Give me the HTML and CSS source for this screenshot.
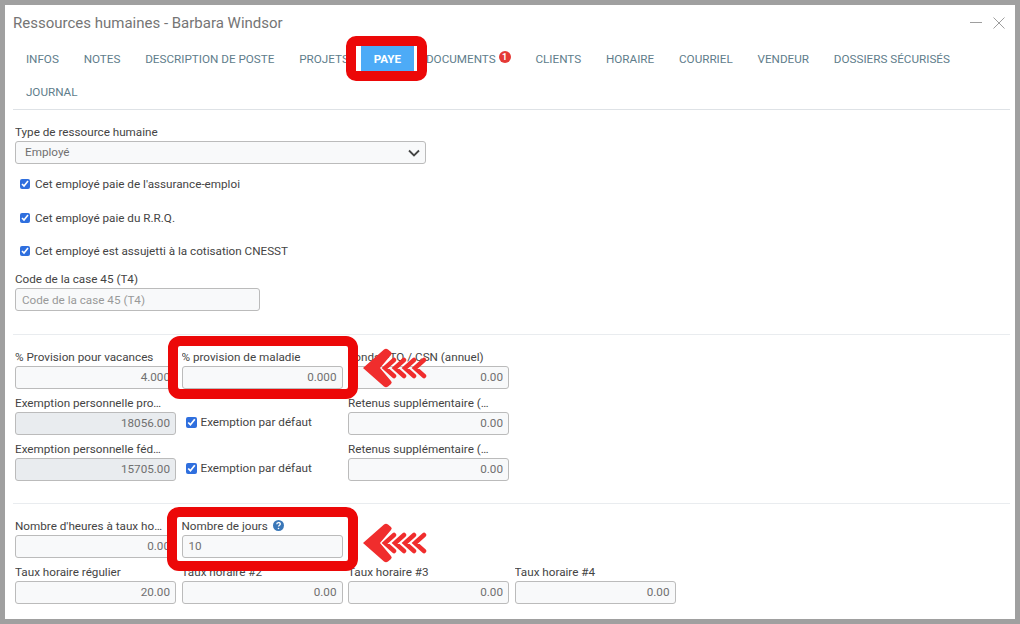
FILE: index.html
```html
<!DOCTYPE html>
<html lang="fr">
<head>
  <meta charset="UTF-8">
  <title>Ressources humaines - Barbara Windsor</title>
  <link rel="stylesheet" href="styles.css">
</head>
<body>
  <div class="dialog">
    <!-- Title bar -->
    <div class="dialog-header">
      <span class="dialog-title">Ressources humaines - Barbara Windsor</span>
      <div class="window-actions">
        <svg width="12" height="12" viewBox="0 0 12 12"><path d="M0 5.500h12" stroke="#9e9e9e" stroke-width="1"/></svg>
        <svg width="12" height="12" viewBox="0 0 12 12"><path d="M.5.5l11 11M11.5.5l-11 11" stroke="#9e9e9e" stroke-width="1" fill="none"/></svg>
      </div>
    </div>

    <!-- Tabs -->
    <div class="tabs">
      <span class="tab">INFOS</span>
      <span class="tab">NOTES</span>
      <span class="tab">DESCRIPTION DE POSTE</span>
      <span class="tab">PROJETS</span>
      <span class="tab active">PAYE</span>
      <span class="tab">DOCUMENTS<span class="badge">1</span></span>
      <span class="tab">CLIENTS</span>
      <span class="tab">HORAIRE</span>
      <span class="tab">COURRIEL</span>
      <span class="tab">VENDEUR</span>
      <span class="tab">DOSSIERS SÉCURISÉS</span>
      <span class="tab">JOURNAL</span>
    </div>

    <!-- General section -->
    <div class="section first-section">
      <div class="field-label">Type de ressource humaine</div>
      <div class="select-box">
        <select class="select-input">
          <option>Employé</option>
        </select>
        <svg class="select-arrow" width="12" height="8" viewBox="0 0 12 8"><path d="M1 1.500l5 5 5-5" stroke="#444" stroke-width="1.800" fill="none"/></svg>
      </div>
      <div class="checks">
        <label class="check-row"><input type="checkbox" class="small-check" checked>Cet employé paie de l'assurance-emploi</label>
        <label class="check-row"><input type="checkbox" class="small-check" checked>Cet employé paie du R.R.Q.</label>
        <label class="check-row"><input type="checkbox" class="small-check" checked>Cet employé est assujetti à la cotisation CNESST</label>
      </div>
      <div class="field-label">Code de la case 45 (T4)</div>
      <input class="text-input code-input" placeholder="Code de la case 45 (T4)">
    </div>

    <!-- Provisions section -->
    <div class="section">
      <div class="field-grid">
        <div class="field"><div class="field-label">% Provision pour vacances</div><input class="text-input number" value="4.000"></div>
        <div class="field"><div class="field-label">% provision de maladie</div><input class="text-input number" value="0.000"></div>
        <div class="field"><div class="field-label">Fonds FTQ / CSN (annuel)</div><input class="text-input number" value="0.00"></div>
        <div></div>

        <div class="field"><div class="field-label">Exemption personnelle provinciale</div><input class="text-input number" value="18056.00" disabled></div>
        <label class="default-check"><input type="checkbox" checked>Exemption par défaut</label>
        <div class="field"><div class="field-label">Retenus supplémentaire (Québec)</div><input class="text-input number" value="0.00"></div>
        <div></div>

        <div class="field"><div class="field-label">Exemption personnelle fédérale</div><input class="text-input number" value="15705.00" disabled></div>
        <label class="default-check"><input type="checkbox" checked>Exemption par défaut</label>
        <div class="field"><div class="field-label">Retenus supplémentaire (Québec)</div><input class="text-input number" value="0.00"></div>
      </div>
    </div>

    <!-- Hours section -->
    <div class="section last-section">
      <div class="field-grid">
        <div class="field"><div class="field-label">Nombre d'heures à taux horaire</div><input class="text-input number" value="0.00"></div>
        <div class="field">
          <div class="field-label">Nombre de jours
            <svg class="help-icon" width="11" height="11" viewBox="0 0 11 11"><circle cx="5.5" cy="5.5" r="5.5" fill="#3a77b8"/><path d="M3.8 4.2c0-2.2 3.5-2.2 3.5-.2 0 1.2-1.8 1.2-1.8 2.6" stroke="#fff" stroke-width="1.3" fill="none"/><circle cx="5.5" cy="8.5" r=".8" fill="#fff"/></svg>
          </div>
          <input class="text-input" value="10">
        </div>
        <div></div>
        <div></div>
        <div class="field"><div class="field-label">Taux horaire régulier</div><input class="text-input number" value="20.00"></div>
        <div class="field"><div class="field-label">Taux horaire #2</div><input class="text-input number" value="0.00"></div>
        <div class="field"><div class="field-label">Taux horaire #3</div><input class="text-input number" value="0.00"></div>
        <div class="field"><div class="field-label">Taux horaire #4</div><input class="text-input number" value="0.00"></div>
      </div>
    </div>
  </div>

  <!-- Annotations drawn over the screenshot -->
  <div class="highlight highlight-tab"></div>
  <div class="highlight highlight-sick"></div>
  <div class="highlight highlight-days"></div>

  <svg class="arrow arrow-sick" width="64" height="40" viewBox="0 0 64 40">
    <path d="M0 20L21 1.500Q23 0 25 1.500L28 4Q29.500 5.500 28 7L17 20L28 33Q29.500 34.500 28 36L25 38.500Q23 40 21 38.500Z" fill="#f02d2d"/>
    <path d="M31 12l-9 8 9 8M41 12l-9 8 9 8M51 12l-9 8 9 8M61 12l-9 8 9 8" stroke="#f02d2d" stroke-width="4.500" stroke-linecap="round" fill="none"/>
  </svg>
  <svg class="arrow arrow-days" width="64" height="40" viewBox="0 0 64 40">
    <path d="M0 20L21 1.500Q23 0 25 1.500L28 4Q29.500 5.500 28 7L17 20L28 33Q29.500 34.500 28 36L25 38.500Q23 40 21 38.500Z" fill="#f02d2d"/>
    <path d="M31 12l-9 8 9 8M41 12l-9 8 9 8M51 12l-9 8 9 8M61 12l-9 8 9 8" stroke="#f02d2d" stroke-width="4.500" stroke-linecap="round" fill="none"/>
  </svg>
</body>
</html>
```

FILE: styles.css
```css
* {
  box-sizing: border-box;
}

html,
body {
  height: 100%;
}

body {
  margin: 0;
  padding: 5px;
  background-color: #a0a0a0;
  font-family: Roboto, "Liberation Sans", sans-serif;
  font-size: 11.7px;
  color: #444;
  overflow: hidden;
}

.dialog {
  height: 614px;
  padding: 0 5px 0 8px;
  background-color: #fff;
}

.dialog-header {
  display: flex;
  justify-content: space-between;
  align-items: center;
  height: 41px;
  padding-bottom: 5px;
}

.dialog-title {
  font-size: 15px;
  color: #757575;
}

.window-actions {
  display: flex;
  gap: 11px;
  margin-right: 5px;
  margin-top: -1px;
}

.tabs {
  display: flex;
  flex-wrap: wrap;
  row-gap: 8px;
  padding: 0 0 5px 0.5px;
  border-bottom: 1px solid #dee2e6;
}

.tab {
  display: flex;
  align-items: center;
  height: 25px;
  padding: 0 12.4px;
  color: #607d8b;
}

.tab.active {
  background-color: #4dabf7;
  color: #fff;
  font-weight: 700;
}

.badge {
  width: 12px;
  height: 12px;
  margin: -3px 0 0 3px;
  border-radius: 50%;
  background-color: #e53935;
  color: #fff;
  font-size: 9px;
  font-weight: 700;
  line-height: 12px;
  text-align: center;
}

.section {
  padding: 14px 0 22px 2px;
  border-bottom: 1px solid #e9ecef;
}

.first-section {
  padding-bottom: 23px;
}

.last-section {
  border-bottom: 0;
}

.field-label {
  height: 17px;
  padding-right: 13px;
  line-height: 17px;
  white-space: nowrap;
  overflow: hidden;
  text-overflow: ellipsis;
}

.help-icon {
  margin-left: 2px;
  vertical-align: -1px;
}

.select-box {
  position: relative;
  width: 411px;
}

.select-input {
  display: block;
  width: 100%;
  height: 23px;
  padding: 0 9px 2px;
  border: 1px solid #bbb;
  border-radius: 3px;
  background-color: #f8f9fa;
  font-family: inherit;
  font-size: 11.7px;
  color: #707070;
  appearance: none;
}

.select-arrow {
  position: absolute;
  top: 8px;
  right: 6px;
}

.checks {
  display: flex;
  flex-direction: column;
  gap: 17.5px;
  padding: 12px 0;
}

.check-row {
  display: flex;
  align-items: center;
  height: 16px;
}

.small-check {
  width: 10px;
  height: 10px;
  margin: 0 5px 0 5px;
  accent-color: #2f6fde;
}

.text-input {
  display: block;
  width: 100%;
  height: 23px;
  padding: 0 5px 2px 6px;
  border: 1px solid #bbb;
  border-radius: 3px;
  background-color: #f8f9fa;
  font-family: inherit;
  font-size: 11.7px;
  color: #707070;
}

.text-input:disabled {
  background-color: #e9ecef;
  color: #707070;
}

.text-input::placeholder {
  color: #999;
}

.number {
  text-align: right;
}

.code-input {
  width: 245px;
  padding-bottom: 0;
}

.field-grid {
  display: grid;
  grid-template-columns: repeat(4, 161px);
  gap: 6px 5.5px;
}

.default-check {
  display: flex;
  align-items: center;
  align-self: end;
  height: 23px;
  padding: 0 0 3px 4px;
}

.default-check input {
  width: 11px;
  height: 11px;
  margin: 0 4px 0 0;
  accent-color: #2f6fde;
}

.highlight {
  position: absolute;
  border: 10px solid #ec0808;
  border-radius: 12px;
}

.highlight-tab {
  top: 36px;
  left: 346px;
  width: 81px;
  height: 45px;
  border-radius: 10px;
}

.highlight-sick {
  top: 336px;
  left: 168px;
  width: 190px;
  height: 63px;
}

.highlight-days {
  top: 507px;
  left: 167px;
  width: 191px;
  height: 64px;
}

.arrow {
  position: absolute;
  left: 363px;
}

.arrow-sick {
  top: 348px;
}

.arrow-days {
  top: 523px;
}
```
